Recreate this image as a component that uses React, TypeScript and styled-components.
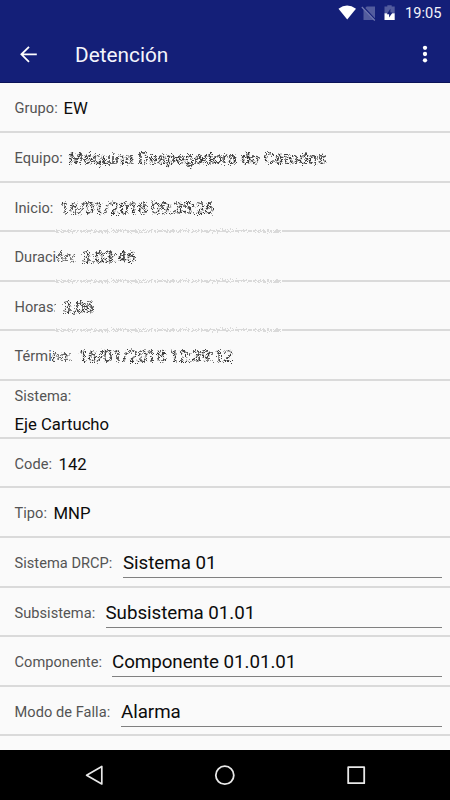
import React from 'react';
import styled, { createGlobalStyle } from 'styled-components';

const GlobalStyle = createGlobalStyle`
  * { box-sizing: border-box; }
  body { margin: 0; background: #fafafa; font-family: Roboto, sans-serif; }
`;

const Screen = styled.div`
  width: 450px;
  height: 800px;
  display: flex;
  flex-direction: column;
  overflow: hidden;
  background: #fafafa;
`;

const Header = styled.header`
  height: 83px;
  flex: none;
  background: #141f78;
  border-bottom: 1px solid #0b1358;
  color: #f4f5fc;
`;

const StatusBar = styled.div`
  height: 25px;
  display: flex;
  align-items: center;
  justify-content: flex-end;
  padding-right: 8px;
  svg { display: block; }
`;

const Clock = styled.span`
  width: 37px;
  margin-left: 7px;
  padding-top: 1px;
  font-size: 14.6px;
  line-height: 25px;
  white-space: nowrap;
`;

const Toolbar = styled.div`
  height: 58px;
  display: flex;
  align-items: center;
  padding: 0 21px 0 19px;
  svg { display: block; flex: none; }
`;

const Title = styled.h1`
  flex: 1;
  margin: 1px 0 0 37px;
  font-size: 20.8px;
  font-weight: 400;
  letter-spacing: 0;
`;

const Form = styled.main`
  flex: 1;
  min-height: 0;
  overflow: hidden;
`;

const Row = styled.div<{ $h: number }>`
  height: ${p => p.$h}px;
  display: flex;
  flex-direction: column;
`;

const RowBody = styled.div`
  flex: 1;
  display: flex;
  align-items: center;
  padding: 2px 8px 0 14.5px;
  white-space: nowrap;
`;

const StackedBody = styled.div`
  flex: 1;
  min-height: 0;
  display: flex;
  flex-direction: column;
  align-items: flex-start;
  padding: 3px 14.5px 0;
`;

const Label = styled.span<{ $w?: number; $ls?: number }>`
  flex: none;
  width: ${p => (p.$w ? p.$w + 'px' : 'auto')};
  letter-spacing: ${p => p.$ls ?? 0.04}px;
  font-size: 14.6px;
  line-height: 24px;
  color: #545454;
`;

const Value = styled.span<{ $ls?: number }>`
  padding-top: 1px;
  font-size: 16.7px;
  line-height: 31px;
  letter-spacing: ${p => p.$ls ?? 0}px;
  color: #0c0c0c;
`;

const Scrambled = styled.span`
  filter: url(#scatter);
`;

const ScrambledValue = styled(Value)`
  filter: url(#scatter);
  color: #3c3c3c;
`;

const Field = styled.div<{ $ls?: number }>`
  flex: 1;
  height: 31px;
  line-height: 32px;
  margin-top: -1px;
  border-bottom: 1px solid #808080;
  font-size: 18.75px;
  letter-spacing: ${p => p.$ls ?? -0.04}px;
  color: #0c0c0c;
`;

const Divider = styled.div`
  height: 2px;
  flex: none;
  display: grid;
  grid-template-columns: 55px 227px 1fr;
`;

const Line = styled.div<{ $scrambled?: boolean }>`
  background: #dadada;
  filter: ${p => (p.$scrambled ? 'url(#scatter-line)' : 'none')};
`;

const NavBar = styled.nav`
  height: 50px;
  flex: none;
  display: flex;
  align-items: center;
  justify-content: space-between;
  padding: 0 84px;
  background: #000;
  svg { display: block; }
`;

const Defs = styled.svg`
  position: absolute;
`;

type Item = {
  label: string;
  smudged?: string;
  value: string;
  kind: 'plain' | 'hidden' | 'field' | 'stacked';
  h: number;
  w?: number;
  ls?: number;
  vls?: number;
  scrambledLine?: boolean;
};

const items: Item[] = [
  { label: 'Grupo:', value: 'EW', kind: 'plain', h: 50, w: 49 },
  { label: 'Equipo:', value: 'Máquina Despegadora de Cátodos', kind: 'hidden', h: 50, w: 54, vls: 0.06 },
  { label: 'Inicio:', value: '16/01/2018 09:35:26', kind: 'hidden', h: 49, w: 45.5, vls: -0.18, scrambledLine: true },
  { label: 'Duraci', smudged: 'ón:', value: '3:03:46', kind: 'hidden', h: 50, w: 67, vls: -0.1, scrambledLine: true },
  { label: 'Horas', smudged: ':', value: '3,06', kind: 'hidden', h: 49, w: 48, scrambledLine: true },
  { label: 'Térmi', smudged: 'no:', value: '16/01/2018 12:39:12', kind: 'hidden', h: 50, w: 64, vls: -0.18 },
  { label: 'Sistema:', value: 'Eje Cartucho', kind: 'stacked', h: 58 },
  { label: 'Code:', value: '142', kind: 'plain', h: 49, w: 44 },
  { label: 'Tipo:', value: 'MNP', kind: 'plain', h: 50, w: 39 },
  { label: 'Sistema DRCP:', value: 'Sistema 01', kind: 'field', h: 50, w: 108.5 },
  { label: 'Subsistema:', value: 'Subsistema 01.01', kind: 'field', h: 49, w: 91 },
  { label: 'Componente:', value: 'Componente 01.01.01', kind: 'field', h: 50, w: 97.5 },
  { label: 'Modo de Falla:', value: 'Alarma', kind: 'field', h: 49, w: 106.5 },
];

function FormRow({ item }: { item: Item }) {
  const label = (
    <Label $w={item.w} $ls={item.ls}>
      {item.label}
      {item.smudged && <Scrambled>{item.smudged}</Scrambled>}
    </Label>
  );
  return (
    <Row $h={item.h}>
      {item.kind === 'stacked' ? (
        <StackedBody>
          {label}
          <Value>{item.value}</Value>
        </StackedBody>
      ) : (
        <RowBody>
          {label}
          {item.kind === 'plain' && <Value $ls={item.vls}>{item.value}</Value>}
          {item.kind === 'hidden' && <ScrambledValue $ls={item.vls}>{item.value}</ScrambledValue>}
          {item.kind === 'field' && <Field $ls={item.vls}>{item.value}</Field>}
        </RowBody>
      )}
      <Divider>
        <Line />
        <Line $scrambled={item.scrambledLine} />
        <Line />
      </Divider>
    </Row>
  );
}

export default function App() {
  return (
    <Screen>
      <GlobalStyle />
      <Defs width="0" height="0">
        <filter id="scatter" x="-5%" y="-30%" width="110%" height="160%" colorInterpolationFilters="sRGB">
          <feTurbulence type="fractalNoise" baseFrequency="0.8" numOctaves="2" seed="4" result="n" />
          <feDisplacementMap in="SourceGraphic" in2="n" scale="7" xChannelSelector="R" yChannelSelector="G" result="d" />
          <feGaussianBlur in="d" stdDeviation="0.6" />
        </filter>
        <filter id="scatter-line" filterUnits="userSpaceOnUse" x="0" y="-4" width="227" height="10" colorInterpolationFilters="sRGB">
          <feTurbulence type="fractalNoise" baseFrequency="0.8" numOctaves="2" seed="7" result="n" />
          <feDisplacementMap in="SourceGraphic" in2="n" scale="7" xChannelSelector="R" yChannelSelector="G" result="d" />
          <feGaussianBlur in="d" stdDeviation="0.6" />
        </filter>
      </Defs>
      <Header>
        <StatusBar>
          <svg width="61" height="25" viewBox="0 0 61 25">
            <path d="M1.5 8.8 Q10 2.2 19 8.8 L10.2 19.6 Z" fill="#fff" />
            <path d="M29.7 6.5 H38 V20 H26.5 V9.5 Z" fill="#535c9e" />
            <path d="M25.5 6.5 L38.5 20.5" stroke="#141f78" strokeWidth="2.2" />
            <path d="M24.8 7 L37.8 20.5" stroke="#747bb2" strokeWidth="1.2" />
            <path d="M50.3 5.2 H54.7 V6.6 H57.7 V13.5 H47.5 V6.6 H50.3 Z" fill="#535c9e" />
            <path d="M47.5 13.3 H57.7 V20 H47.5 Z" fill="#fff" />
            <path d="M53.4 8.8 L49.8 14.2 H52.1 V17.6 L55.6 12.6 H53.4 Z" fill="#141f78" />
          </svg>
          <Clock>19:05</Clock>
        </StatusBar>
        <Toolbar>
          <svg width="19" height="19" viewBox="0 0 19 19" fill="none" stroke="#fff" strokeWidth="1.8">
            <path d="M17.8 9.3 H2.8 M10 1.8 L2.4 9.3 L10 16.8" />
          </svg>
          <Title>Detención</Title>
          <svg width="8" height="20" viewBox="0 0 8 20" fill="#fff">
            <circle cx="4" cy="3.8" r="2.15" />
            <circle cx="4" cy="10" r="2.15" />
            <circle cx="4" cy="16.3" r="2.15" />
          </svg>
        </Toolbar>
      </Header>
      <Form>
        {items.map(item => (
          <FormRow key={item.label} item={item} />
        ))}
      </Form>
      <NavBar>
        <svg width="20" height="22" viewBox="0 0 20 22" fill="none" stroke="#e8e8e8" strokeWidth="1.7" strokeLinejoin="round">
          <path d="M17.8 2.5 V20 L2.6 11.2 Z" />
        </svg>
        <svg width="22" height="22" viewBox="0 0 22 22" fill="none" stroke="#e8e8e8" strokeWidth="1.8">
          <circle cx="10.8" cy="11.2" r="9" />
        </svg>
        <svg width="20" height="22" viewBox="0 0 20 22" fill="none" stroke="#e8e8e8" strokeWidth="1.8" strokeLinejoin="round">
          <rect x="2.2" y="3.2" width="16" height="16" />
        </svg>
      </NavBar>
    </Screen>
  );
}
